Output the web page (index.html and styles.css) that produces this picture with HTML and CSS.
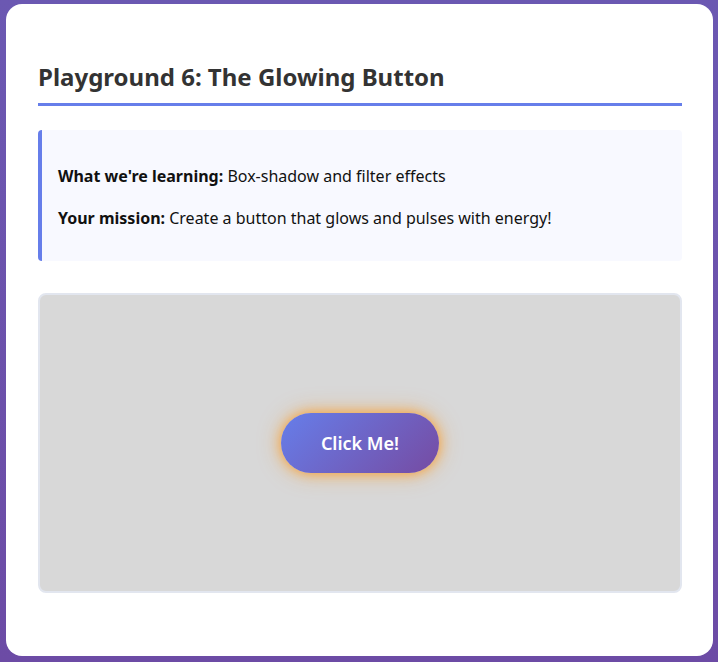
FILE: index.html
```html
<!DOCTYPE html>
<html lang="en">
<head>
<meta charset="utf-8">
<title>Playground 6: The Glowing Button</title>
<link rel="stylesheet" href="styles.css">
</head>
<body>
<div class="container">
  <h2 class="title">Playground 6: The Glowing Button</h2>
  <div class="info">
    <p><strong>What we're learning:</strong> Box-shadow and filter effects</p>
    <p><strong>Your mission:</strong> Create a button that glows and pulses with energy!</p>
  </div>
  <div class="playground">
    <button class="glow-btn">Click Me!</button>
  </div>
</div>
</body>
</html>
```
FILE: styles.css
```css
html, body {
  margin: 0;
  height: 100%;
}
body {
  background: linear-gradient(180deg, #6b58b2 0%, #6c4ba5 100%);
  padding: 4px 5px 6px 6px;
  box-sizing: border-box;
  font-family: "Noto Sans", "Open Sans", sans-serif;
}
.container {
  background: #fff;
  border-radius: 16px;
  padding: 32px 31px 32px 32px;
  height: 100%;
  box-sizing: border-box;
}
.title {
  margin: 27px 0 24px;
  font-size: 24px;
  font-weight: 700;
  color: #333;
  line-height: 1.2;
  padding-bottom: 11px;
  border-bottom: 3px solid #667eea;
}
.info {
  background: #f8f9ff;
  border-left: 4px solid #667eea;
  border-radius: 4px;
  padding: 17px 16px 14px;
  margin-bottom: 32px;
}
.info p {
  margin: 16px 0;
  font-size: 16px;
  line-height: 26px;
  color: #111;
}
.playground {
  height: 300px;
  box-sizing: border-box;
  background: #d8d8d8;
  border: 2px solid #e2e6ef;
  border-radius: 8px;
  display: flex;
  align-items: center;
  justify-content: center;
}
.glow-btn {
  height: 60px;
  padding: 0 40px;
  border: none;
  border-radius: 30px;
  background: linear-gradient(135deg, #667eea 0%, #764ba2 100%);
  color: #fff;
  font-family: "Noto Sans", "Open Sans", sans-serif;
  font-size: 18px;
  font-weight: 600;
  box-shadow: 0 0 12px rgba(255, 150, 20, 0.75), 0 0 24px rgba(255, 140, 0, 0.4);
  cursor: pointer;
}
```
